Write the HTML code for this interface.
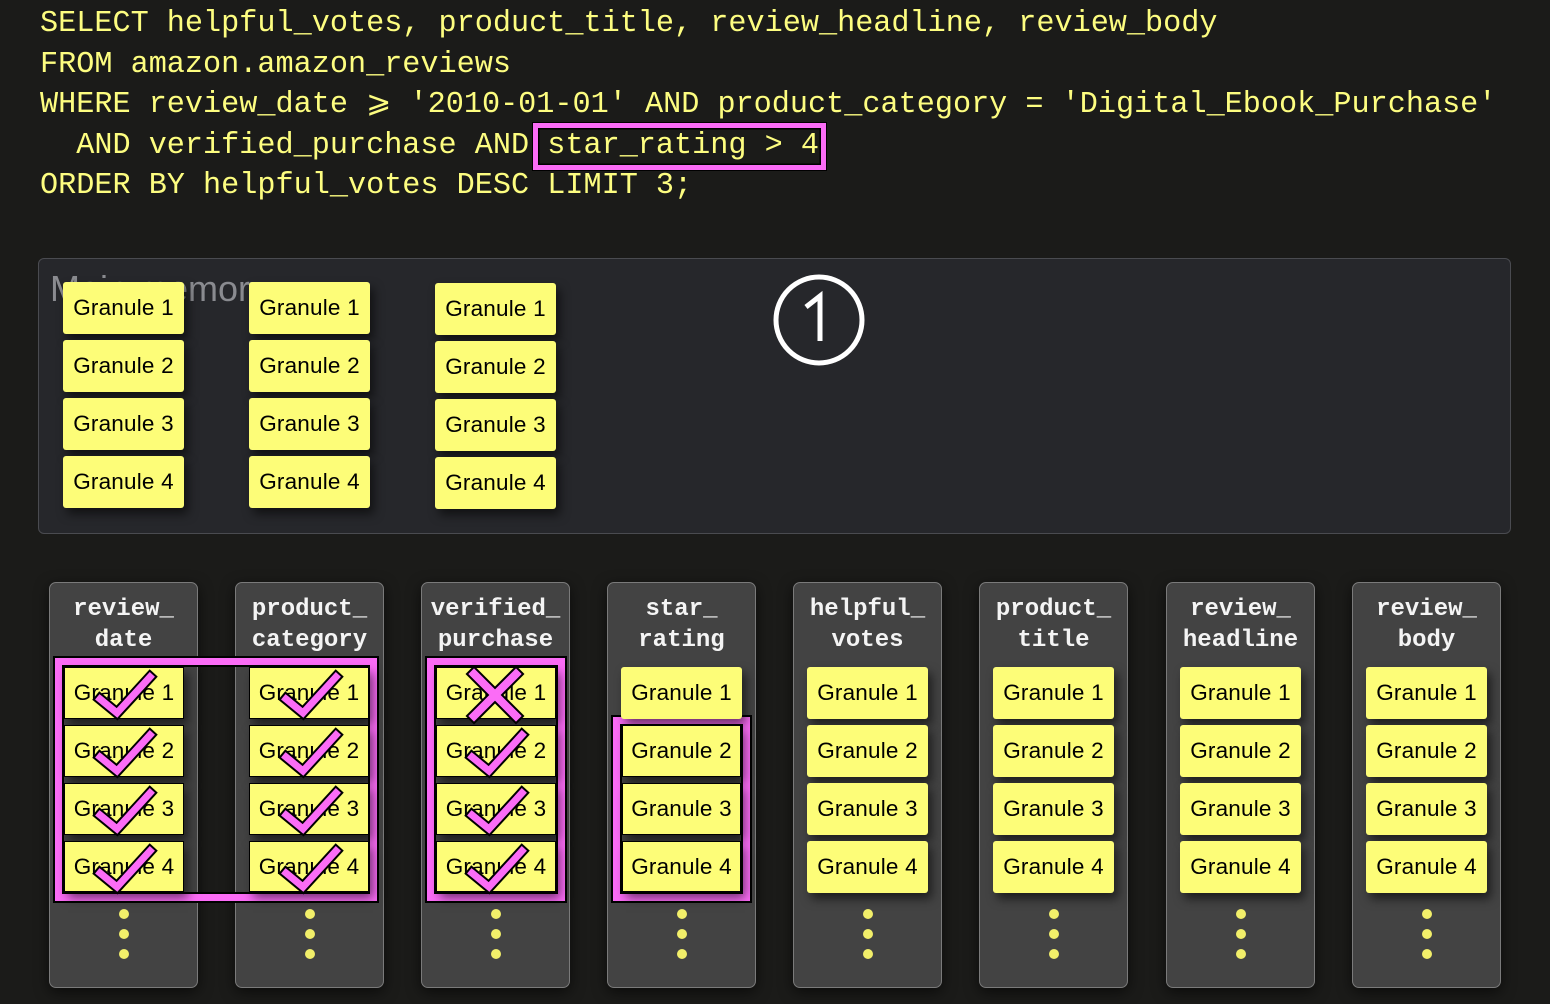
<!DOCTYPE html>
<html><head><meta charset="utf-8"><style>
*{margin:0;padding:0;box-sizing:border-box}
body{width:1550px;height:1004px;background:#1b1b19;position:relative;overflow:hidden;font-family:"Liberation Sans",sans-serif}
.code{position:absolute;left:40px;top:4px;font-family:"Liberation Mono",monospace;font-size:30.2px;line-height:40.5px;color:#fdfd80;white-space:pre}
.hl{position:absolute;left:533px;top:123px;width:293px;height:47px;border:5px solid #fb6cf6;box-shadow:inset 0 0 0 1.5px #000,0 0 0 1px #000}
.panel{position:absolute;left:38px;top:258px;width:1473px;height:276px;background:#26272b;border:1px solid #4a4b50;border-radius:6px}
.mm{position:absolute;left:50px;top:268px;font-size:36px;color:#8a8b90}
.g{position:absolute;width:121px;height:52px;background:#fdfd78;border-radius:3px;color:#000;font-size:22.5px;line-height:52px;text-align:center;box-shadow:4px 6px 10px rgba(0,0,0,.55);letter-spacing:0.2px}
.gb{border:1.5px solid #000;line-height:49px;border-radius:0}
.col{position:absolute;top:582px;width:149px;height:406px;background:#434343;border:1.5px solid #7a7a7a;border-radius:7px;box-shadow:0 4px 14px rgba(0,0,0,.6)}
.col .h{position:absolute;left:0;right:0;top:11px;text-align:center;color:#f4f4f4;font-family:"Liberation Mono",monospace;font-weight:bold;font-size:24px;line-height:31px}
.box{position:absolute;border:7px solid #fb6cf6;outline:2px solid #000;box-shadow:inset 0 0 0 2px #000}
</style></head><body>
<div class="code">SELECT helpful_votes, product_title, review_headline, review_body
FROM amazon.amazon_reviews
WHERE review_date ⩾ '2010-01-01' AND product_category = 'Digital_Ebook_Purchase'
  AND verified_purchase AND star_rating &gt; 4
ORDER BY helpful_votes DESC LIMIT 3;</div>
<div class="hl"></div>

<div class="panel"></div>
<div class="mm">Main memory</div>
<svg style="position:absolute;left:770px;top:272px" width="100" height="100"><circle cx="49" cy="48" r="43" fill="none" stroke="#fff" stroke-width="5"/><path d="M36 35 L50 24 L50 69" fill="none" stroke="#fff" stroke-width="5" stroke-linejoin="miter"/></svg>

<div class="g" style="left:63px;top:282px">Granule 1</div>
<div class="g" style="left:63px;top:340px">Granule 2</div>
<div class="g" style="left:63px;top:398px">Granule 3</div>
<div class="g" style="left:63px;top:456px">Granule 4</div>
<div class="g" style="left:249px;top:282px">Granule 1</div>
<div class="g" style="left:249px;top:340px">Granule 2</div>
<div class="g" style="left:249px;top:398px">Granule 3</div>
<div class="g" style="left:249px;top:456px">Granule 4</div>
<div class="g" style="left:435px;top:283px">Granule 1</div>
<div class="g" style="left:435px;top:341px">Granule 2</div>
<div class="g" style="left:435px;top:399px">Granule 3</div>
<div class="g" style="left:435px;top:457px">Granule 4</div>

<div class="col" style="left:49px"><div class="h">review_<br>date</div></div>
<div class="col" style="left:235px"><div class="h">product_<br>category</div></div>
<div class="col" style="left:421px"><div class="h">verified_<br>purchase</div></div>
<div class="col" style="left:607px"><div class="h">star_<br>rating</div></div>
<div class="col" style="left:793px"><div class="h">helpful_<br>votes</div></div>
<div class="col" style="left:979px"><div class="h">product_<br>title</div></div>
<div class="col" style="left:1166px"><div class="h">review_<br>headline</div></div>
<div class="col" style="left:1352px"><div class="h">review_<br>body</div></div>

<div class="box" style="left:55px;top:658px;width:322px;height:243px"></div>
<div class="box" style="left:427px;top:658px;width:138px;height:243px"></div>
<div class="box" style="left:613px;top:717px;width:137px;height:184px"></div>

<div class="g gb" style="left:64px;top:667px;width:120px">Granule 1</div>
<div class="g gb" style="left:64px;top:725px;width:120px">Granule 2</div>
<div class="g gb" style="left:64px;top:783px;width:120px">Granule 3</div>
<div class="g gb" style="left:64px;top:841px;width:120px;height:51px">Granule 4</div>
<div class="g gb" style="left:249px;top:667px;width:120px">Granule 1</div>
<div class="g gb" style="left:249px;top:725px;width:120px">Granule 2</div>
<div class="g gb" style="left:249px;top:783px;width:120px">Granule 3</div>
<div class="g gb" style="left:249px;top:841px;width:120px;height:51px">Granule 4</div>
<div class="g gb" style="left:436px;top:667px;width:120px">Granule 1</div>
<div class="g gb" style="left:436px;top:725px;width:120px">Granule 2</div>
<div class="g gb" style="left:436px;top:783px;width:120px">Granule 3</div>
<div class="g gb" style="left:436px;top:841px;width:120px;height:51px">Granule 4</div>

<div class="g" style="left:621px;top:667px">Granule 1</div>
<div class="g gb" style="left:622px;top:725px;width:119px">Granule 2</div>
<div class="g gb" style="left:622px;top:783px;width:119px">Granule 3</div>
<div class="g gb" style="left:622px;top:841px;width:119px;height:51px">Granule 4</div>

<div class="g" style="left:807px;top:667px">Granule 1</div>
<div class="g" style="left:807px;top:725px">Granule 2</div>
<div class="g" style="left:807px;top:783px">Granule 3</div>
<div class="g" style="left:807px;top:841px">Granule 4</div>
<div class="g" style="left:993px;top:667px">Granule 1</div>
<div class="g" style="left:993px;top:725px">Granule 2</div>
<div class="g" style="left:993px;top:783px">Granule 3</div>
<div class="g" style="left:993px;top:841px">Granule 4</div>
<div class="g" style="left:1180px;top:667px">Granule 1</div>
<div class="g" style="left:1180px;top:725px">Granule 2</div>
<div class="g" style="left:1180px;top:783px">Granule 3</div>
<div class="g" style="left:1180px;top:841px">Granule 4</div>
<div class="g" style="left:1366px;top:667px">Granule 1</div>
<div class="g" style="left:1366px;top:725px">Granule 2</div>
<div class="g" style="left:1366px;top:783px">Granule 3</div>
<div class="g" style="left:1366px;top:841px">Granule 4</div>

<svg style="position:absolute;left:0;top:0" width="1550" height="1004">
<defs>
<g id="ck"><polyline points="0,22 17,36 50,0" fill="none" stroke="#000" stroke-width="11" stroke-linecap="square"/><polyline points="0,22 17,36 50,0" fill="none" stroke="#fb6cf6" stroke-width="7" stroke-linecap="square"/></g>
<g id="dt"><circle cx="0" cy="0" r="5" fill="#f2ef6a"/><circle cx="0" cy="20" r="5" fill="#f2ef6a"/><circle cx="0" cy="40" r="5" fill="#f2ef6a"/></g>
</defs>
<use href="#ck" x="100" y="677"/><use href="#ck" x="100" y="735"/><use href="#ck" x="100" y="793"/><use href="#ck" x="100" y="851"/>
<use href="#ck" x="286" y="677"/><use href="#ck" x="286" y="735"/><use href="#ck" x="286" y="793"/><use href="#ck" x="286" y="851"/>
<use href="#ck" x="472" y="735"/><use href="#ck" x="472" y="793"/><use href="#ck" x="472" y="851"/>
<g stroke-linecap="square"><path d="M474 674 L516 716 M516 674 L474 716" stroke="#000" stroke-width="12"/><path d="M474 674 L516 716 M516 674 L474 716" stroke="#fb6cf6" stroke-width="8"/></g>
<use href="#dt" x="124" y="914"/><use href="#dt" x="310" y="914"/><use href="#dt" x="496" y="914"/><use href="#dt" x="682" y="914"/>
<use href="#dt" x="868" y="914"/><use href="#dt" x="1054" y="914"/><use href="#dt" x="1241" y="914"/><use href="#dt" x="1427" y="914"/>
</svg>
</body></html>
